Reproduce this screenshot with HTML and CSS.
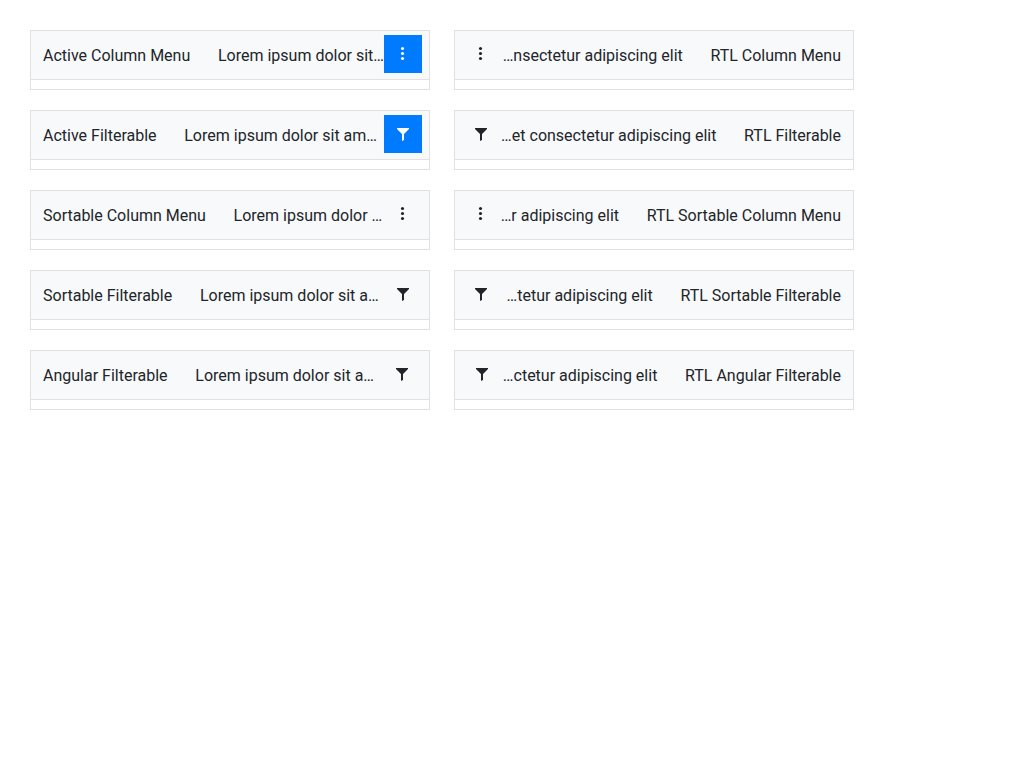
FILE: index.html
```html
<!DOCTYPE html>
<html lang="en">
<head>
<meta charset="utf-8">
<title>Grid headers</title>
<link rel="stylesheet" href="styles.css">
</head>
<body>
<svg class="defs" width="0" height="0">
  <symbol id="dots" viewBox="0 0 38 38"><circle cx="18.5" cy="13.5" r="1.55"/><circle cx="18.5" cy="18.5" r="1.55"/><circle cx="18.5" cy="23.5" r="1.55"/></symbol>
  <symbol id="filter" viewBox="0 0 38 38"><path d="M13 13H25V14L20 19V25L18 26V19L13 14Z"/></symbol>
</svg>
<main class="grids">
  <div class="grid"><div class="header"><span>Active Column Menu</span><span>Lorem ipsum dolor sit…</span><a class="button active"><svg><use href="#dots"/></svg></a></div></div>
  <div class="grid"><div class="header rtl"><span>RTL Column Menu</span><span>…nsectetur adipiscing elit</span><a class="button"><svg><use href="#dots"/></svg></a></div></div>
  <div class="grid"><div class="header"><span>Active Filterable</span><span>Lorem ipsum dolor sit am…</span><a class="button active"><svg><use href="#filter"/></svg></a></div></div>
  <div class="grid"><div class="header rtl"><span>RTL Filterable</span><span>…et consectetur adipiscing elit</span><a class="button"><svg><use href="#filter"/></svg></a></div></div>
  <div class="grid"><div class="header"><span>Sortable Column Menu</span><span>Lorem ipsum dolor …</span><a class="button"><svg><use href="#dots"/></svg></a></div></div>
  <div class="grid"><div class="header rtl"><span>RTL Sortable Column Menu</span><span>…r adipiscing elit</span><a class="button"><svg><use href="#dots"/></svg></a></div></div>
  <div class="grid"><div class="header"><span>Sortable Filterable</span><span>Lorem ipsum dolor sit a…</span><a class="button"><svg><use href="#filter"/></svg></a></div></div>
  <div class="grid"><div class="header rtl"><span>RTL Sortable Filterable</span><span>…tetur adipiscing elit</span><a class="button"><svg><use href="#filter"/></svg></a></div></div>
  <div class="grid"><div class="header angular"><span>Angular Filterable</span><span>Lorem ipsum dolor sit a…</span><a class="button"><svg><use href="#filter"/></svg></a></div></div>
  <div class="grid"><div class="header rtl angular"><span>RTL Angular Filterable</span><span>…ctetur adipiscing elit</span><a class="button"><svg><use href="#filter"/></svg></a></div></div>
</main>
</body>
</html>
```
FILE: styles.css
```css
* { box-sizing: border-box; }
body {
  margin: 0;
  padding: 30px;
  background: #fff;
  color: #212529;
  font: 16px/24px Roboto, sans-serif;
}
.defs { display: none; }
.grids {
  display: grid;
  grid-template-columns: 400px 400px;
  gap: 20px 24px;
}
.grid {
  height: 60px;
  border: 1px solid #e0e1e3;
}
.header {
  display: flex;
  align-items: flex-start;
  gap: 27.7px;
  height: 49px;
  padding: 4px 7px 0 12px;
  background: #f8f9fb;
  border-bottom: 1px solid #e0e1e3;
  white-space: nowrap;
}
.header.rtl {
  flex-direction: row-reverse;
  padding: 4px 12px 0 7px;
}
.header.angular { padding-right: 8px; }
.header.rtl.angular { padding: 4px 12px 0 8px; }
.header span {
  padding-top: 9px;
  flex: none;
}
.button {
  width: 38px;
  height: 38px;
  flex: none;
  margin-left: auto;
}
.rtl .button { margin: 0 auto 0 0; }
/* the button may sit closer to the text than the column gap */
.header:not(.rtl) span + span { margin-right: -27.7px; }
.rtl span + span { margin-left: -27.7px; }
.button svg {
  display: block;
  width: 38px;
  height: 38px;
  fill: currentColor;
}
.active { background: #007bff; color: #fff; }
```
